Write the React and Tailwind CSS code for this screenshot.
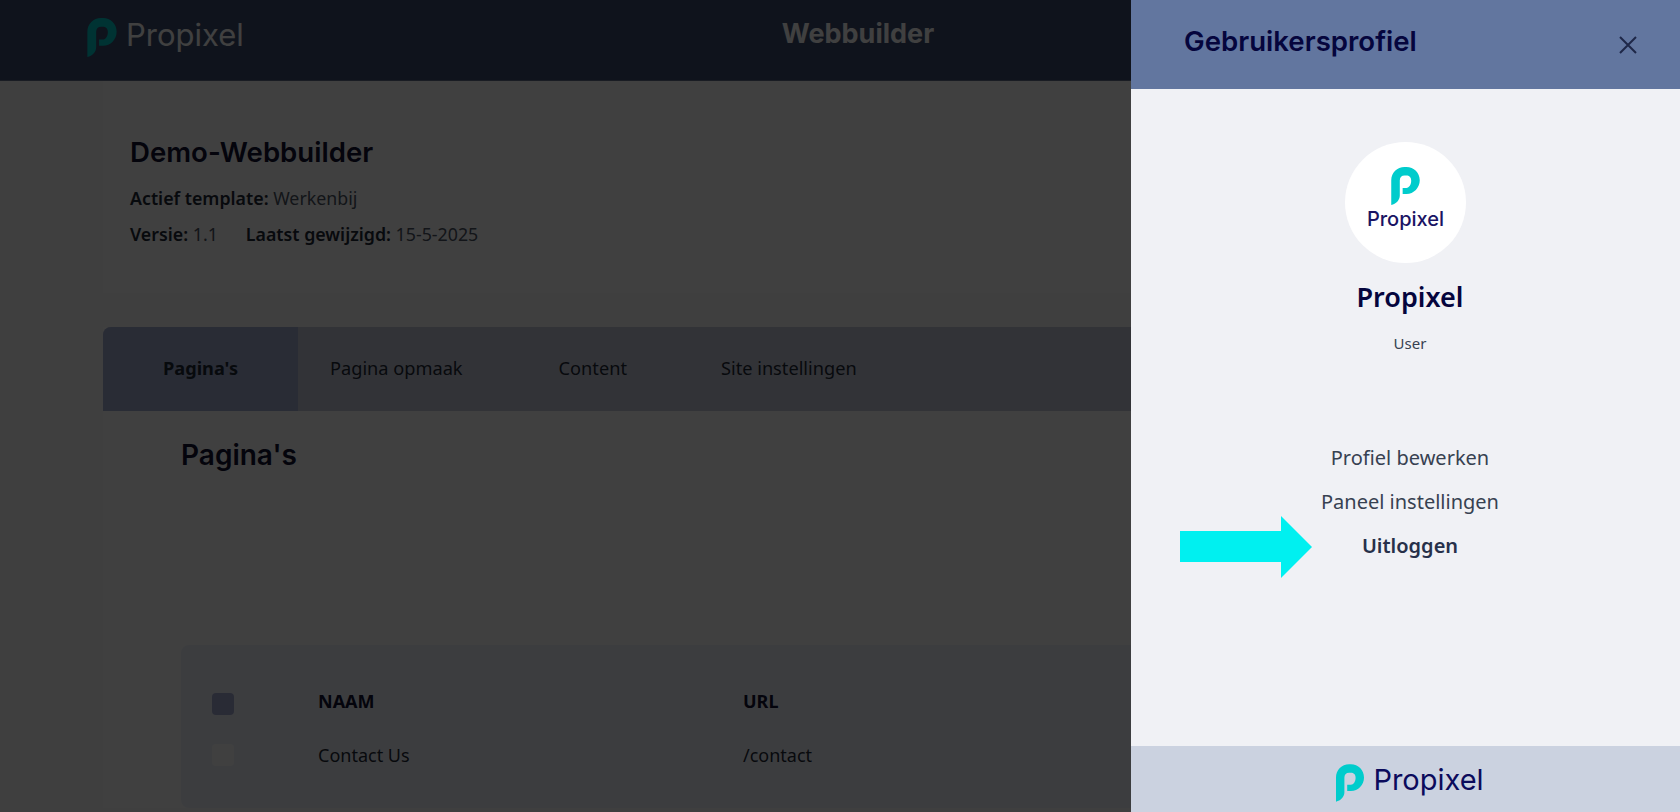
const logoPath =
  "M0 40V14C0 6.2 6.2 0 14 0h2C23.8 0 30 6.2 30 14S23.8 28.500 16 28.500H12V22h4c2.800 0 5-3.500 5-7.500S18.800 9 16 9h-2c-3 0-5 2-5 5v16c0 5-4 9-9 10Z";

function LogoMark({ className, fill }) {
  return (
    <svg viewBox="0 0 30 40" className={className} fill={fill}>
      <path d={logoPath} />
    </svg>
  );
}

export default function App() {
  return (
    <div className="relative h-[812px] overflow-hidden bg-[#fafbfc] font-['Noto_Sans',sans-serif] text-[#1f2937]">
      <header className="flex h-[81px] items-center border-b border-[#ffffff33] bg-[#3c4c70]">
        <div className="flex w-[460px] items-center pb-[5px] pl-[87px]">
          <LogoMark className="h-[39px] w-[30px]" fill="#00cccc" />
          <span className="ml-[9px] pb-1.5 font-['Inter',sans-serif] text-[31px] font-normal leading-none text-white">Propixel</span>
        </div>
        <div className="w-[796px] pb-[11px] text-center font-['Inter',sans-serif] text-[27px] font-bold text-white">Webbuilder</div>
      </header>

      <main className="ml-[103px] w-[1474px]">
        <section className="h-[212px] bg-white px-[27px] pt-[55px]">
          <h1 className="font-['Inter',sans-serif] text-[27.6px] font-semibold leading-8 text-[#101030]">Demo-Webbuilder</h1>
          <p className="mt-[18px] text-[17.8px] leading-6 text-[#4b5563]"><strong className="font-semibold text-[#1f2937]">Actief template:</strong> Werkenbij</p>
          <p className="mt-3 flex gap-7 text-[17.8px] leading-6 text-[#4b5563]">
            <span><strong className="font-semibold text-[#1f2937]">Versie:</strong> 1.1</span>
            <span><strong className="font-semibold text-[#1f2937]">Laatst gewijzigd:</strong> 15-5-2025</span>
          </p>
        </section>

        <section className="mt-[34px] bg-white">
          <nav className="flex h-[84px] items-center rounded-t-lg bg-[#c8ccdc] text-[18.2px]">
            <div className="flex h-full w-[195px] items-center justify-center rounded-tl-lg bg-[#a4b0d4] font-bold">Pagina's</div>
            <div className="ml-8">Pagina opmaak</div>
            <div className="ml-24">Content</div>
            <div className="ml-[94px]">Site instellingen</div>
          </nav>
          <div className="pl-[78px] pt-7">
            <h2 className="font-['Inter',sans-serif] text-[28px] font-semibold leading-8 text-[#101030]">Pagina's</h2>
            <div className="mt-[174px] h-[163px] rounded-lg bg-[#f0f4fc] px-[31px] pt-12 text-lg">
              <div className="flex h-[22px] items-center">
                <span className="h-[22px] w-[22px] rounded bg-[#a4acd4]" />
                <span className="ml-[84px] w-[425px] pb-1.5 font-bold text-[#101030]">NAAM</span>
                <span className="pb-1.5 font-bold text-[#101030]">URL</span>
              </div>
              <div className="mt-[29px] flex h-[22px] items-center">
                <span className="h-[22px] w-[22px] rounded bg-white" />
                <span className="ml-[84px] w-[425px]">Contact Us</span>
                <span>/contact</span>
              </div>
            </div>
          </div>
        </section>
      </main>

      <div className="absolute inset-0 bg-black/75" />

      <aside className="absolute inset-y-0 right-0 flex w-[549px] flex-col bg-[#f0f1f5]">
        <div className="flex h-[89px] shrink-0 items-center justify-between bg-[#62769f] pl-[53px] pr-[43px]">
          <h2 className="pb-1.5 font-['Inter',sans-serif] text-[27.6px] font-semibold text-[#05053d]">Gebruikersprofiel</h2>
          <svg viewBox="0 0 18 18" className="h-[18px] w-[18px]" fill="none" stroke="#1e2748" strokeWidth="2">
            <path d="M1 1l16 16M17 1L1 17" />
          </svg>
        </div>

        <div className="flex flex-1 flex-col items-center pt-[53px]">
          <div className="flex h-[121px] w-[121px] flex-col items-center justify-center rounded-full bg-white pb-1.5">
            <LogoMark className="h-[38px] w-[29px]" fill="#00cccc" />
            <span className="font-['Inter',sans-serif] text-xl font-medium leading-7 text-[#1a1464]">Propixel</span>
          </div>
          <div className="flex flex-col items-center pl-[9px]">
            <div className="mt-4 text-[27px] font-semibold leading-9 text-[#05053d]">Propixel</div>
            <div className="mt-[18px] text-[15px] leading-5 text-[#374151]">User</div>
            <div className="mt-[91px] text-xl leading-7 text-[#374151]">Profiel bewerken</div>
            <div className="mt-4 text-xl leading-7 text-[#374151]">Paneel instellingen</div>
            <div className="mt-4 text-xl font-semibold leading-7 text-[#27304a]">Uitloggen</div>
          </div>
        </div>

        <div className="flex h-[66px] shrink-0 items-center justify-center bg-[#cbd2e0] pl-[9px] pt-1">
          <LogoMark className="mt-1 h-[38px] w-[28px]" fill="#00cccc" />
          <span className="ml-[9px] pb-1 font-['Inter',sans-serif] text-[29px] font-normal leading-none text-[#0b0b5c]">Propixel</span>
        </div>
      </aside>

      <svg viewBox="0 0 132 62" className="absolute left-[1180px] top-[516px] h-[62px] w-[132px]" fill="#00f0f0">
        <path d="M0 15H101V0L132 31L101 62V46H0Z" />
      </svg>
    </div>
  );
}
